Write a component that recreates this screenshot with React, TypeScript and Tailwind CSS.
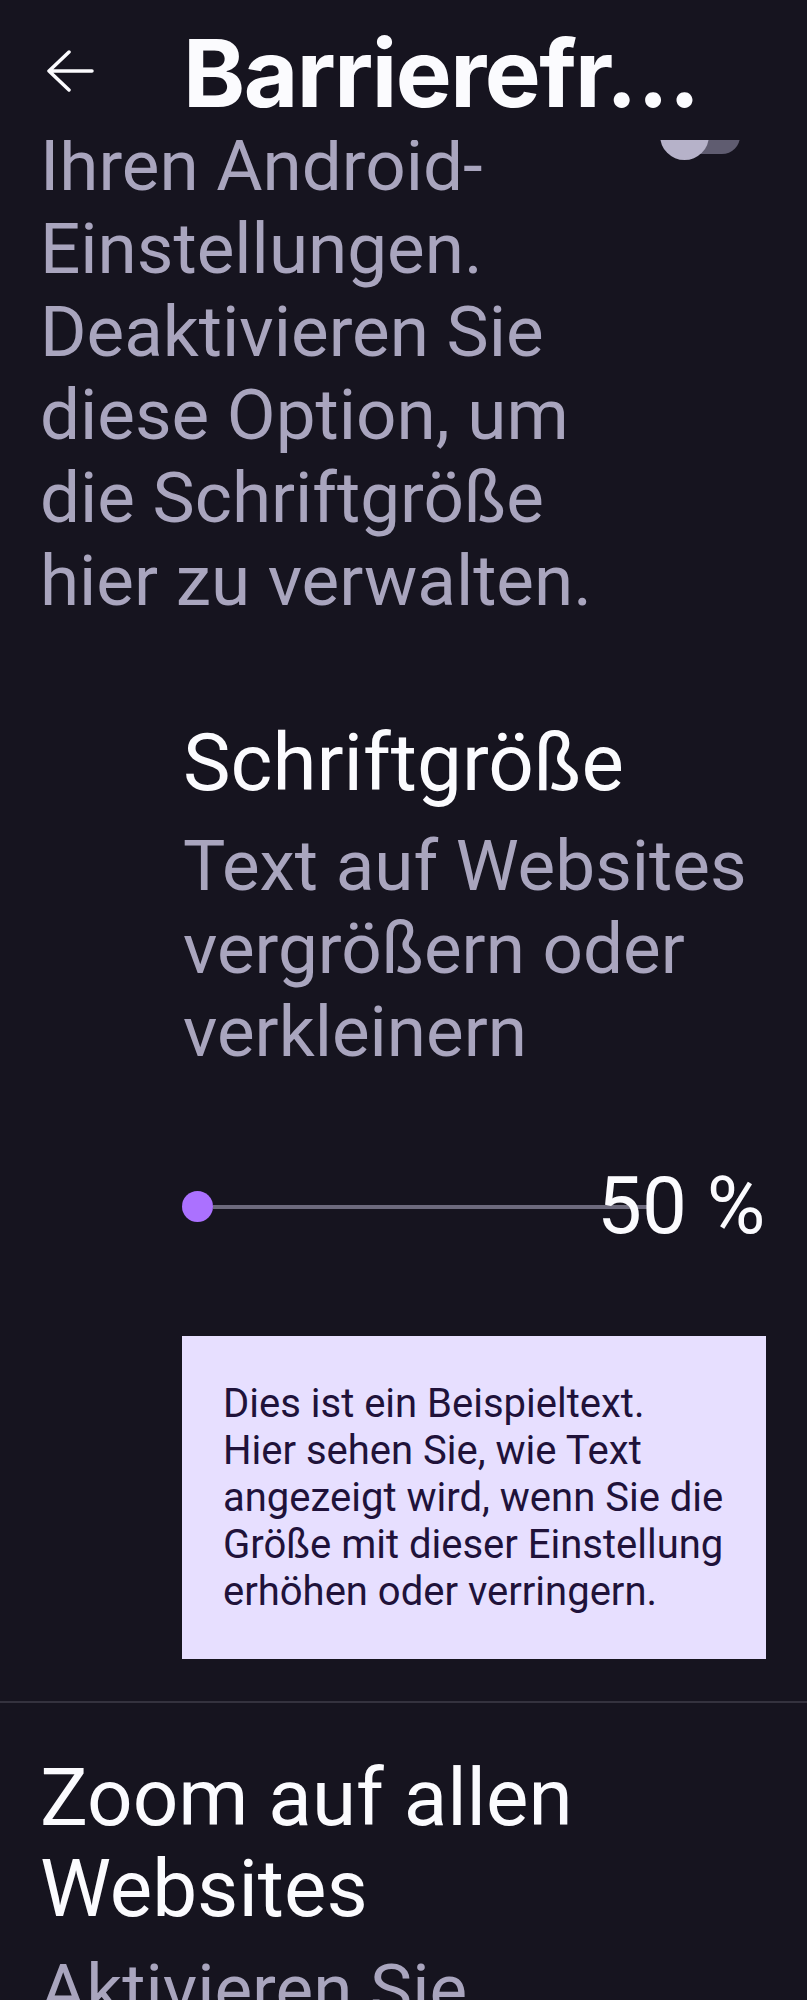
const autoLines = [
  "Die Schriftgröße",
  "entspricht",
  "Ihren Android-",
  "Einstellungen.",
  "Deaktivieren Sie",
  "diese Option, um",
  "die Schriftgröße",
  "hier zu verwalten.",
];

const sampleLines = [
  "Dies ist ein Beispieltext.",
  "Hier sehen Sie, wie Text",
  "angezeigt wird, wenn Sie die",
  "Größe mit dieser Einstellung",
  "erhöhen oder verringern.",
];

function BackArrow() {
  return (
    <svg width="48" height="42" viewBox="0 0 48 42" fill="none" className="ml-[46px] mt-[50px] shrink-0">
      <path
        d="M3 21H46M23 2L3 21L23 40"
        stroke="#fbfbfe"
        strokeWidth="3.5"
        strokeLinecap="round"
        strokeLinejoin="round"
      />
    </svg>
  );
}

function Toggle() {
  return (
    <div className="relative mt-[153px] ml-[28px] flex h-[49px] w-[80px] shrink-0 items-center">
      <div className="ml-[8px] h-[36px] w-[72px] rounded-full bg-[#5f5c70]" />
      <div className="absolute left-0 top-0 h-[49px] w-[49px] rounded-full bg-[#b6b2c9]" />
    </div>
  );
}

export default function App() {
  return (
    <div className="flex h-[2000px] w-[807px] flex-col overflow-hidden bg-[#16141f] font-['Roboto',sans-serif]">
      <header className="relative z-10 flex h-[140px] shrink-0 items-start bg-[#16141f]">
        <BackArrow />
        <h1 className="ml-[89px] mt-[26px] whitespace-nowrap font-['Inter',sans-serif] text-[94px] font-bold leading-none tracking-[-1.5px] text-[#fbfbfe]">
          Barrierefr…
        </h1>
      </header>

      <main className="-mt-[182px] flex flex-col">
        {/* automatic font sizing, scrolled partly under the toolbar */}
        <section className="flex pl-[40px]">
          <p className="w-[592px] shrink-0 text-[71px] leading-[83px] text-[#a9a5be]">
            {autoLines.map((l, i) => (
              <span key={i} className="block whitespace-nowrap">
                {l}
              </span>
            ))}
          </p>
          <Toggle />
        </section>

        {/* font size */}
        <section className="pl-[183px] pr-[42px] pt-[96px]">
          <h2 className="text-[80px] leading-[91px] text-[#fbfbfe]">Schriftgröße</h2>
          <p className="mt-[15px] w-[584px] text-[71px] leading-[83px] text-[#a9a5be]">
            Text auf Websites vergrößern oder verkleinern
          </p>

          <div className="mt-[88px] flex h-[91px] items-center">
            <div className="relative z-10 -ml-[1px] h-[31px] w-[31px] shrink-0 rounded-full bg-[#ab71ff]" />
            <div className="h-[4px] w-[437px] shrink-0 bg-[#6d6a7d]" />
            <span className="-ml-[53px] whitespace-nowrap text-[80px] leading-[91px] text-[#fbfbfe]">50 %</span>
          </div>

          <div className="-ml-[1px] mt-[84px] w-[584px] bg-[#e7dfff] py-[44px] pl-[41px] pr-[20px] text-[40px] leading-[47px] text-[#20123a]">
            {sampleLines.map((l) => (
              <span key={l} className="block whitespace-nowrap">
                {l}
              </span>
            ))}
          </div>
        </section>

        <div className="mt-[42px] h-[2px] w-full bg-[#34323e]" />

        {/* zoom on all websites */}
        <section className="px-[40px] pt-[50px]">
          <h2 className="w-[592px] text-[80px] leading-[91px] text-[#fbfbfe]">Zoom auf allen Websites</h2>
          <p className="mt-[13px] w-[592px] text-[71px] leading-[83px] text-[#a9a5be]">
            Aktivieren Sie diese Option, um das Zoomen auf allen Websites zu erlauben.
          </p>
        </section>
      </main>
    </div>
  );
}
